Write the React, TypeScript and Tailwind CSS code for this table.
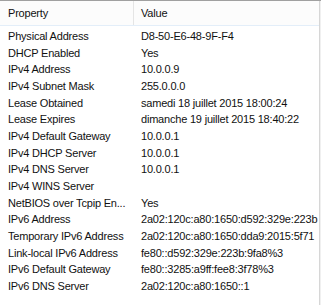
import React from 'react';

type Prop = { name: string; value: string };

const props: Prop[] = [
  { name: 'Physical Address', value: 'D8-50-E6-48-9F-F4' },
  { name: 'DHCP Enabled', value: 'Yes' },
  { name: 'IPv4 Address', value: '10.0.0.9' },
  { name: 'IPv4 Subnet Mask', value: '255.0.0.0' },
  { name: 'Lease Obtained', value: 'samedi 18 juillet 2015 18:00:24' },
  { name: 'Lease Expires', value: 'dimanche 19 juillet 2015 18:40:22' },
  { name: 'IPv4 Default Gateway', value: '10.0.0.1' },
  { name: 'IPv4 DHCP Server', value: '10.0.0.1' },
  { name: 'IPv4 DNS Server', value: '10.0.0.1' },
  { name: 'IPv4 WINS Server', value: '' },
  { name: 'NetBIOS over Tcpip En...', value: 'Yes' },
  { name: 'IPv6 Address', value: '2a02:120c:a80:1650:d592:329e:223b' },
  { name: 'Temporary IPv6 Address', value: '2a02:120c:a80:1650:dda9:2015:5f71' },
  { name: 'Link-local IPv6 Address', value: 'fe80::d592:329e:223b:9fa8%3' },
  { name: 'IPv6 Default Gateway', value: 'fe80::3285:a9ff:fee8:3f78%3' },
  { name: 'IPv6 DNS Server', value: '2a02:120c:a80:1650::1' },
];

const App = () => {
  return (
    <div
      className="w-[321px] h-[305px] bg-white overflow-hidden flex border-t border-[#a0a0a0] text-[11px] tracking-[-0.2px] text-[#111]"
      style={{ fontFamily: '"Liberation Sans", Arial, sans-serif' }}
    >
      <div className="flex-1 min-w-0 overflow-hidden">
        {/* column headers */}
        <div className="h-[25px] flex bg-[#fcfcfc] border-b border-[#e3eef9]">
          <div className="w-[134px] shrink-0 pl-[8px] flex items-center border-r border-[#e5e5e5]">Property</div>
          <div className="pl-[7px] flex items-center whitespace-nowrap">Value</div>
        </div>

        <div className="pt-[2px]">
          {props.map((p) => (
            <div key={p.name} className="h-[16.67px] flex items-center whitespace-nowrap">
              <div className="w-[134px] shrink-0 pl-[8px]">{p.name}</div>
              <div className="pl-[7px]">{p.value}</div>
            </div>
          ))}
        </div>
      </div>

      {/* edge of the vertical scrollbar */}
      <div className="w-[2px] shrink-0 border-l border-[#d6d6d6] bg-[#f0f0f0]" />
    </div>
  );
};

export default App;
